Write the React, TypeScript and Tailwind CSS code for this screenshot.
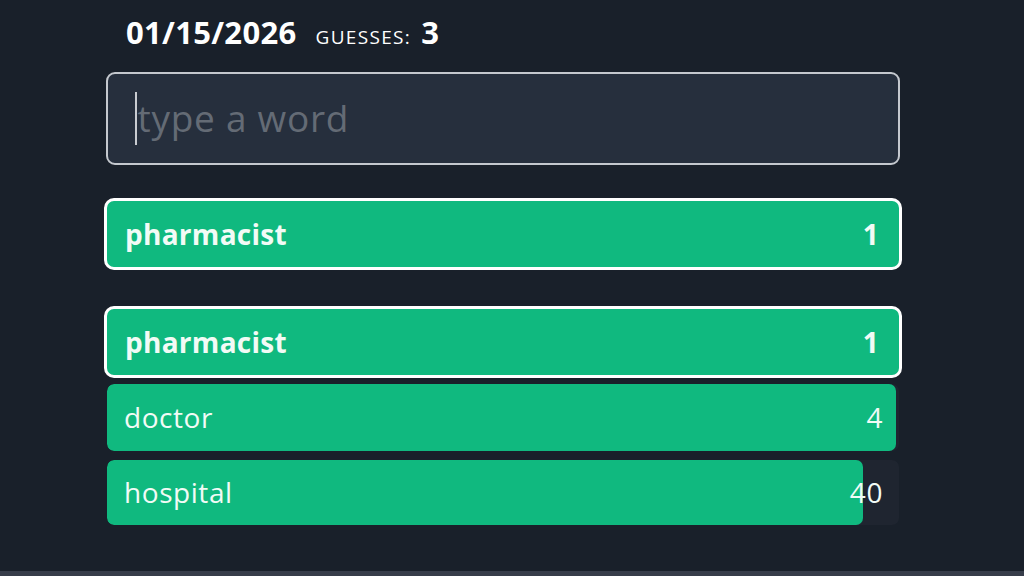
import React from "react";

const font = { fontFamily: "'Open Sans', 'Noto Sans', sans-serif" };

function Row({ word, rank, pct, highlight, h }: { word: string; rank: number; pct: number; highlight?: boolean; h?: string }) {
  if (highlight) {
    return (
      <div className="flex h-[72px] items-center justify-between rounded-[10px] border-[3px] border-white bg-[#10b97f] pl-[18px] pr-[20px] text-[28px] font-bold tracking-[0.01em] text-[#f2fbf6]">
        <span>{word}</span>
        <span>{rank}</span>
      </div>
    );
  }
  return (
    <div className={`relative mx-[3px] overflow-hidden rounded-[7px] bg-[#1f2530] ${h}`}>
      <div className="absolute inset-y-0 left-0 rounded-[7px] bg-[#10b97f]" style={{ width: `${pct}%` }} />
      <div className="relative flex h-full items-center justify-between pl-[17px] pr-[16px] text-[28px] tracking-[0.02em] text-[#f2fbf6]">
        <span>{word}</span>
        <span>{rank}</span>
      </div>
    </div>
  );
}

export default function App() {
  return (
    <div className="flex h-[576px] w-[1024px] flex-col bg-[#19202a]" style={font}>
      <div className="ml-[104px] flex w-[798px] flex-1 flex-col">
        <div className="mt-[9px] flex items-baseline pl-[22px] text-white">
          <span className="text-[31px] font-bold leading-[40px] tracking-[0.01em]">01/15/2026</span>
          <span className="ml-[19px] text-[19px] uppercase tracking-[0.07em]">Guesses:</span>
          <span className="ml-[10px] text-[31px] font-bold">3</span>
        </div>
        <div className="mx-[2px] mt-[16px] flex h-[93px] items-center rounded-[9px] border-2 border-[#c4c8ce] bg-[#262f3d] pl-[27px]">
          <span className="h-[53px] w-[1.5px] bg-[#c9ccd1]" />
          <span className="ml-[1px] text-[37px] tracking-[0.02em] text-[#646b75]">type a word</span>
        </div>
        <div className="mt-[33px]">
          <Row word="pharmacist" rank={1} pct={100} highlight />
        </div>
        <div className="mt-[36px] flex flex-col">
          <Row word="pharmacist" rank={1} pct={100} highlight />
          <div className="mt-[6px]">
            <Row word="doctor" rank={4} pct={99.6} h="h-[67px]" />
          </div>
          <div className="mt-[9px]">
            <Row word="hospital" rank={40} pct={95.5} h="h-[65px]" />
          </div>
        </div>
      </div>
      <div className="h-[5px] bg-[#373d4a]" />
    </div>
  );
}
